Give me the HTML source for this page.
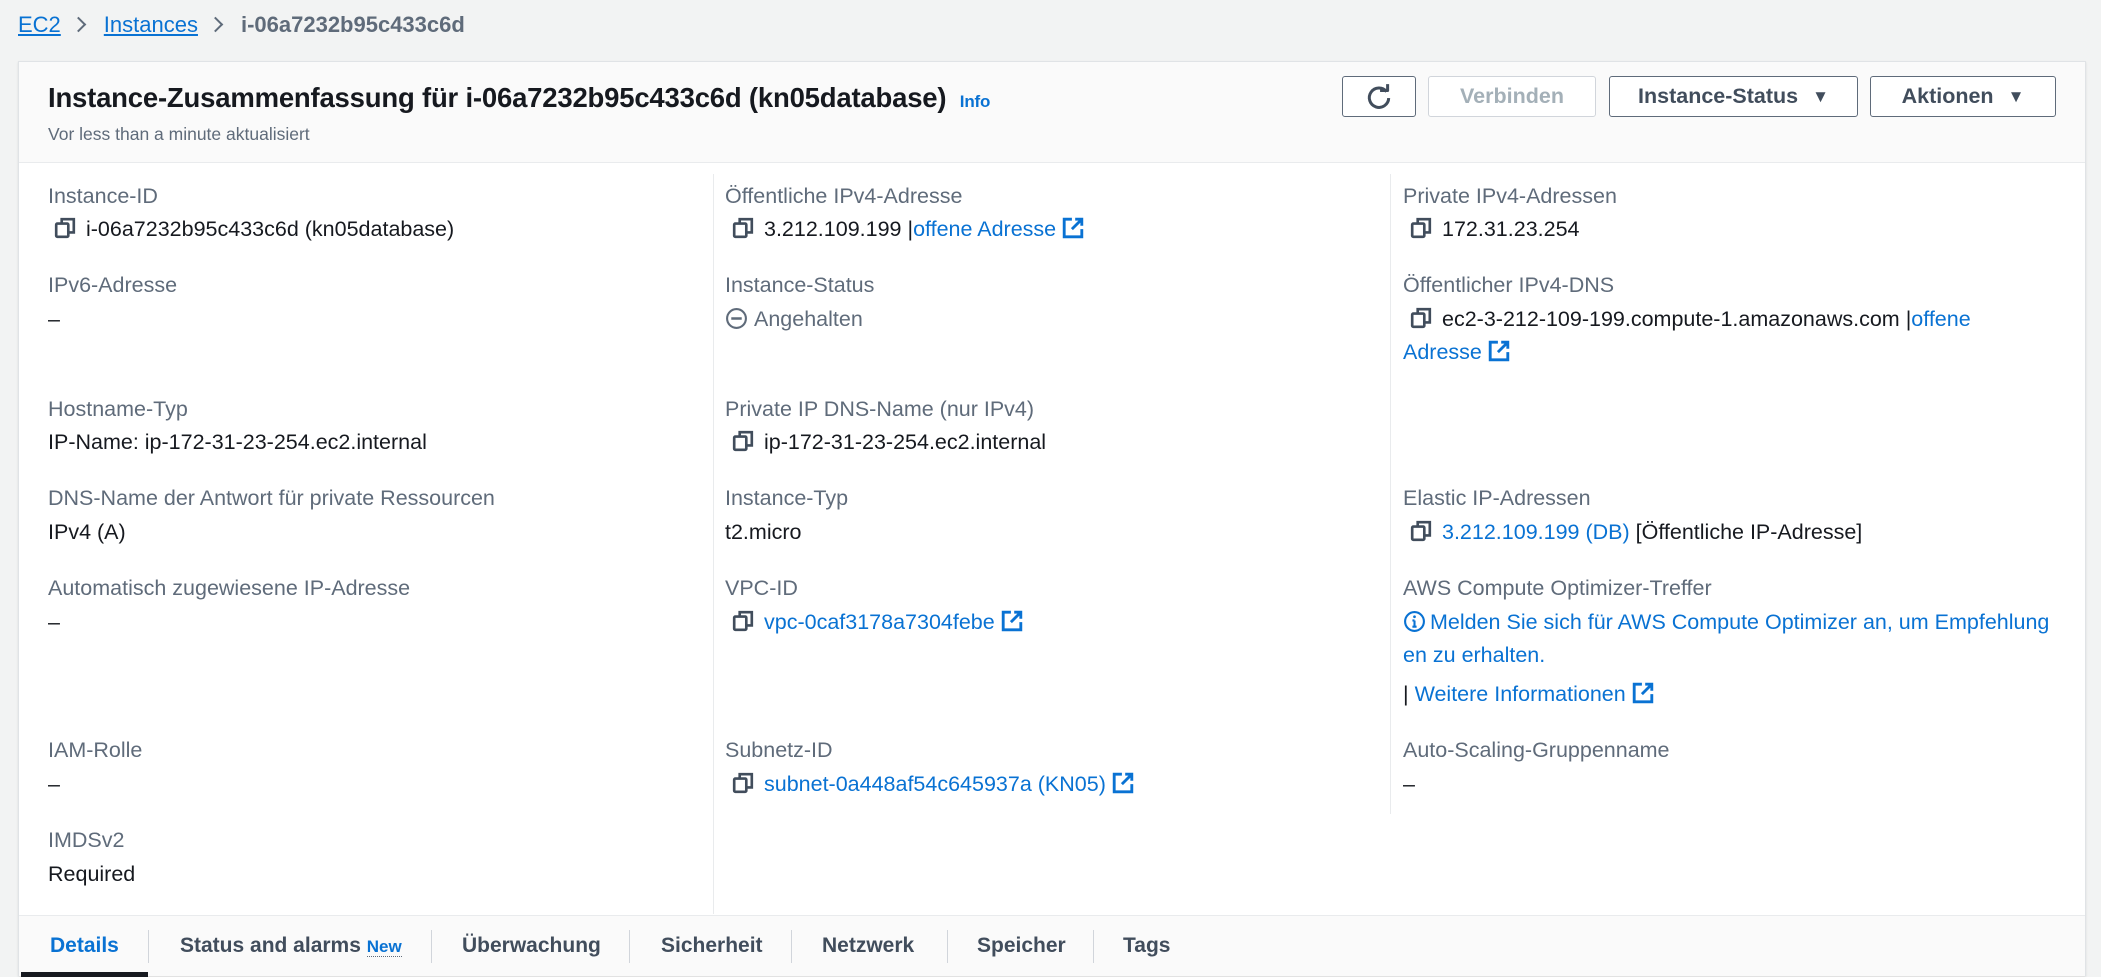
<!DOCTYPE html>
<html><head><meta charset="utf-8"><style>
*{margin:0;padding:0;box-sizing:border-box}
body{width:2101px;height:976px;background:#f2f3f3;font-family:"Liberation Sans",sans-serif;color:#16191f;position:relative;overflow:hidden;font-size:21.5px}
.a{position:absolute;white-space:nowrap;line-height:26px}
.lbl{color:#5f6b7a}
.lk{color:#0972d3}
.card{position:absolute;left:18px;top:61px;width:2068px;height:915px;background:#fff;border:1px solid #e0e3e6;border-bottom:none;box-shadow:0 1px 2px rgba(0,0,0,.1)}
.hdr{position:absolute;left:0;top:0;width:100%;height:101px;background:#fafafa;border-bottom:1px solid #e9ebed}
.btn{position:absolute;top:14px;height:41px;border:1.5px solid #5f6b7a;border-radius:3px;background:#fff;font-weight:bold;color:#414d5c;font-size:21.5px;display:flex;align-items:center;justify-content:center}
.vd{position:absolute;width:1px;background:#e9ebed}
.ci{display:inline-block;vertical-align:-3px;margin-right:10px}
.tabs{position:absolute;left:0;top:854px;width:100%;height:61px;background:#fafafa;border-top:1px solid #e9ebed}
.tab{position:absolute;top:17px;font-weight:bold;color:#414d5c;font-size:21px;line-height:26px}
.ts{position:absolute;top:14px;width:1px;height:33px;background:#d1d5db}
.ch{display:inline-block;width:11px;height:11px;border-top:2.2px solid #5f6b7a;border-right:2.2px solid #5f6b7a;transform:rotate(45deg);margin:0 20px 2px 12px}
</style></head><body>
<div class="a" style="left:18px;top:12px;font-size:22px"><span class="lk" style="text-decoration:underline">EC2</span><span class="ch"></span><span class="lk" style="text-decoration:underline">Instances</span><span class="ch"></span><span style="color:#5f6b7a;font-weight:bold">i-06a7232b95c433c6d</span></div>
<div class="card">
<div class="hdr">
<div class="a" style="left:29px;top:20px;font-size:27.5px;font-weight:bold;line-height:32px;letter-spacing:-0.2px">Instance-Zusammenfassung für i-06a7232b95c433c6d (kn05database) <span class="lk" style="font-size:17px;margin-left:6px">Info</span></div>
<div class="a" style="left:29px;top:59px;font-size:17.5px;color:#5f6b7a">Vor less than a minute aktualisiert</div>
<div class="btn" style="left:1323px;width:74px"><svg width="28" height="28" viewBox="0 0 26 26" fill="none" stroke="#414d5c" stroke-width="2.8"><path d="M20 8A9 9 0 1 0 22 14"/><path d="M14 7h7V1" stroke-linejoin="round"/></svg></div>
<div class="btn" style="left:1409px;width:168px;border-color:#d1d5db;color:#a4b0b8">Verbinden</div>
<div class="btn" style="left:1590px;width:249px">Instance-Status <span style="margin-left:14px;font-size:17px">&#9660;</span></div>
<div class="btn" style="left:1851px;width:186px">Aktionen <span style="margin-left:14px;font-size:17px">&#9660;</span></div>
</div>
<div class="vd" style="left:694px;top:112px;height:740px"></div>
<div class="vd" style="left:1371px;top:112px;height:640px"></div>
</div>
<svg width="0" height="0" style="position:absolute"><defs><symbol id="cp" viewBox="0 0 20 20"><rect x="2" y="6" width="11" height="12" rx="1" fill="none" stroke="#414d5c" stroke-width="2.4"/><path d="M7 6V2h11v12h-5" fill="none" stroke="#414d5c" stroke-width="2.4"/></symbol><symbol id="ex" viewBox="0 0 20 20"><path d="M9 2H2v16h16v-7M12 2h6v6M18 2l-9 9" fill="none" stroke="#0972d3" stroke-width="2.6"/></symbol></defs></svg>
<!-- col1 -->
<div class="a lbl" style="left:48px;top:183px">Instance-ID</div>
<div class="a" style="left:54px;top:216px"><svg class="ci" width="22" height="22"><use href="#cp"/></svg>i-06a7232b95c433c6d (kn05database)</div>
<div class="a lbl" style="left:48px;top:272px">IPv6-Adresse</div>
<div class="a" style="left:48px;top:306px">–</div>
<div class="a lbl" style="left:48px;top:396px">Hostname-Typ</div>
<div class="a" style="left:48px;top:429px">IP-Name: ip-172-31-23-254.ec2.internal</div>
<div class="a lbl" style="left:48px;top:485px">DNS-Name der Antwort für private Ressourcen</div>
<div class="a" style="left:48px;top:519px">IPv4 (A)</div>
<div class="a lbl" style="left:48px;top:575px">Automatisch zugewiesene IP-Adresse</div>
<div class="a" style="left:48px;top:609px">–</div>
<div class="a lbl" style="left:48px;top:737px">IAM-Rolle</div>
<div class="a" style="left:48px;top:771px">–</div>
<div class="a lbl" style="left:48px;top:827px">IMDSv2</div>
<div class="a" style="left:48px;top:861px">Required</div>
<!-- col2 -->
<div class="a lbl" style="left:725px;top:183px">Öffentliche IPv4-Adresse</div>
<div class="a" style="left:732px;top:216px"><svg class="ci" width="22" height="22"><use href="#cp"/></svg>3.212.109.199 |<span class="lk">offene Adresse</span> <svg width="22" height="22" style="vertical-align:-3px"><use href="#ex"/></svg></div>
<div class="a lbl" style="left:725px;top:272px">Instance-Status</div>
<div class="a lbl" style="left:725px;top:306px"><svg width="23" height="23" viewBox="0 0 22 22" style="vertical-align:-4px;margin-right:6px"><circle cx="11" cy="11" r="9" fill="none" stroke="#5f6b7a" stroke-width="2"/><path d="M6 11h10" stroke="#5f6b7a" stroke-width="2.4"/></svg>Angehalten</div>
<div class="a lbl" style="left:725px;top:396px">Private IP DNS-Name (nur IPv4)</div>
<div class="a" style="left:732px;top:429px"><svg class="ci" width="22" height="22"><use href="#cp"/></svg>ip-172-31-23-254.ec2.internal</div>
<div class="a lbl" style="left:725px;top:485px">Instance-Typ</div>
<div class="a" style="left:725px;top:519px">t2.micro</div>
<div class="a lbl" style="left:725px;top:575px">VPC-ID</div>
<div class="a" style="left:732px;top:609px"><svg class="ci" width="22" height="22"><use href="#cp"/></svg><span class="lk">vpc-0caf3178a7304febe</span> <svg width="22" height="22" style="vertical-align:-3px"><use href="#ex"/></svg></div>
<div class="a lbl" style="left:725px;top:737px">Subnetz-ID</div>
<div class="a" style="left:732px;top:771px"><svg class="ci" width="22" height="22"><use href="#cp"/></svg><span class="lk">subnet-0a448af54c645937a (KN05)</span> <svg width="22" height="22" style="vertical-align:-3px"><use href="#ex"/></svg></div>
<!-- col3 -->
<div class="a lbl" style="left:1403px;top:183px">Private IPv4-Adressen</div>
<div class="a" style="left:1410px;top:216px"><svg class="ci" width="22" height="22"><use href="#cp"/></svg>172.31.23.254</div>
<div class="a lbl" style="left:1403px;top:272px">Öffentlicher IPv4-DNS</div>
<div class="a" style="left:1410px;top:306px"><svg class="ci" width="22" height="22"><use href="#cp"/></svg>ec2-3-212-109-199.compute-1.amazonaws.com |<span class="lk">offene</span></div>
<div class="a lk" style="left:1403px;top:339px">Adresse <svg width="22" height="22" style="vertical-align:-3px"><use href="#ex"/></svg></div>
<div class="a lbl" style="left:1403px;top:485px">Elastic IP-Adressen</div>
<div class="a" style="left:1410px;top:519px"><svg class="ci" width="22" height="22"><use href="#cp"/></svg><span class="lk">3.212.109.199 (DB)</span> [Öffentliche IP-Adresse]</div>
<div class="a lbl" style="left:1403px;top:575px">AWS Compute Optimizer-Treffer</div>
<div class="a lk" style="left:1403px;top:609px"><svg width="23" height="23" viewBox="0 0 22 22" style="vertical-align:-4px;margin-right:4px"><circle cx="11" cy="11" r="9" fill="none" stroke="#0972d3" stroke-width="2"/><path d="M11 10v6M9 16h4M9 10h2" stroke="#0972d3" stroke-width="2"/><circle cx="11" cy="6.5" r="1.3" fill="#0972d3"/></svg>Melden Sie sich für AWS Compute Optimizer an, um Empfehlung</div>
<div class="a lk" style="left:1403px;top:642px">en zu erhalten.</div>
<div class="a" style="left:1403px;top:681px">| <span class="lk">Weitere Informationen</span> <svg width="22" height="22" style="vertical-align:-3px"><use href="#ex"/></svg></div>
<div class="a lbl" style="left:1403px;top:737px">Auto-Scaling-Gruppenname</div>
<div class="a" style="left:1403px;top:771px">–</div>
<!-- tabs -->
<div class="card" style="top:915px;height:61px;border-top:none;box-shadow:none;background:transparent">
<div class="tabs" style="top:0;border-top:1px solid #e9ebed">
<div class="tab" style="left:31px;color:#0972d3">Details</div>
<div class="ts" style="left:129px"></div>
<div class="tab" style="left:161px">Status and alarms <span style="color:#0972d3;font-size:17px;border-bottom:1px dotted #5f6b7a">New</span></div>
<div class="ts" style="left:412px"></div>
<div class="tab" style="left:443px">Überwachung</div>
<div class="ts" style="left:610px"></div>
<div class="tab" style="left:642px">Sicherheit</div>
<div class="ts" style="left:772px"></div>
<div class="tab" style="left:803px">Netzwerk</div>
<div class="ts" style="left:928px"></div>
<div class="tab" style="left:958px">Speicher</div>
<div class="ts" style="left:1074px"></div>
<div class="tab" style="left:1104px">Tags</div>
<div style="position:absolute;left:2px;top:56px;width:127px;height:5px;background:#16191f"></div>
</div></div>
</body></html>
